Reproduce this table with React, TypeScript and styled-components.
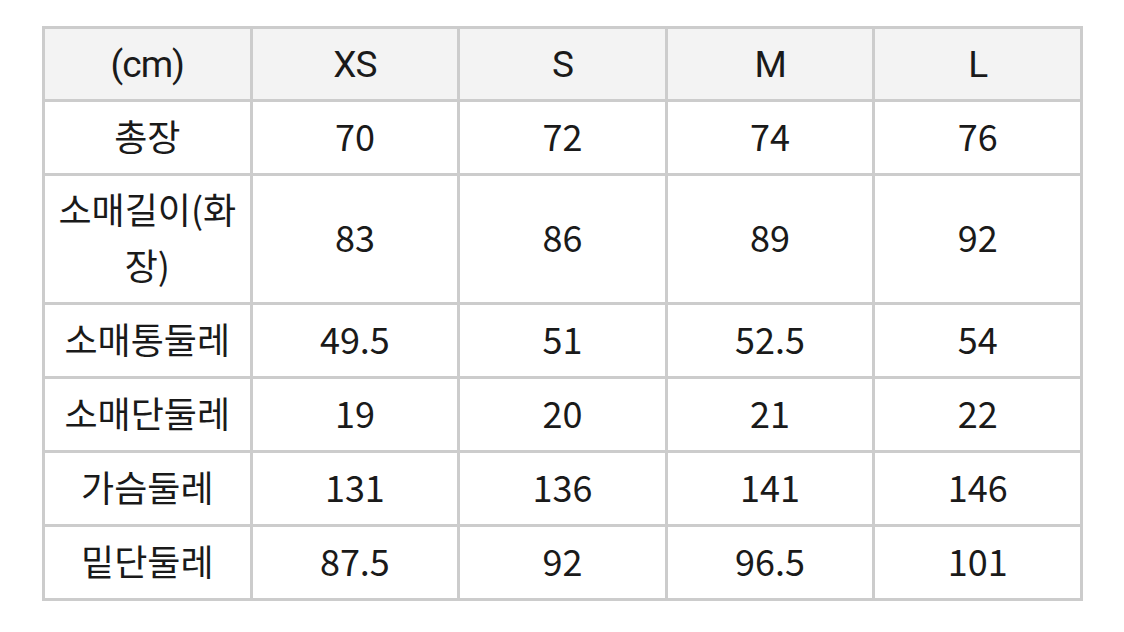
import React from 'react'
import styled, { createGlobalStyle } from 'styled-components'

const GlobalStyle = createGlobalStyle`
  html, body {
    margin: 0;
    background: #ffffff;
  }
`

const sizes = ['XS', 'S', 'M', 'L']

const rows: { label: string; values: string[] }[] = [
  { label: '총장', values: ['70', '72', '74', '76'] },
  { label: '소매길이(화장)', values: ['83', '86', '89', '92'] },
  { label: '소매통둘레', values: ['49.5', '51', '52.5', '54'] },
  { label: '소매단둘레', values: ['19', '20', '21', '22'] },
  { label: '가슴둘레', values: ['131', '136', '141', '146'] },
  { label: '밑단둘레', values: ['87.5', '92', '96.5', '101'] },
]

export default function App() {
  return (
    <Page>
      <GlobalStyle />
      <SizeTable>
        <thead>
          <tr>
            <HeadCell>(cm)</HeadCell>
            {sizes.map((s) => (
              <HeadCell key={s}>{s}</HeadCell>
            ))}
          </tr>
        </thead>
        <tbody>
          {rows.map((r) => (
            <tr key={r.label}>
              <Cell>{r.label}</Cell>
              {r.values.map((v, i) => (
                <Cell key={i}>{v}</Cell>
              ))}
            </tr>
          ))}
        </tbody>
      </SizeTable>
    </Page>
  )
}

const Page = styled.div`
  padding: 26px 0 0 42px;
`

const SizeTable = styled.table`
  width: 1041px;
  table-layout: fixed;
  border-collapse: collapse;
  border: 3px solid #cccccc;
  color: #1a1a1a;
`

const HeadCell = styled.th`
  height: 70px;
  padding: 0 8px;
  border: 3px solid #cccccc;
  background: #f3f3f3;
  font-family: Roboto, 'Noto Sans CJK KR', sans-serif;
  font-size: 37px;
  font-weight: 400;
  letter-spacing: -1px;
  text-align: center;
`

const Cell = styled.td`
  height: 74px;
  padding: 4px 8px 10px;
  border: 3px solid #cccccc;
  font-family: 'Noto Sans CJK KR', sans-serif;
  font-size: 36px;
  line-height: 56px;
  text-align: center;
  box-sizing: border-box;
`
